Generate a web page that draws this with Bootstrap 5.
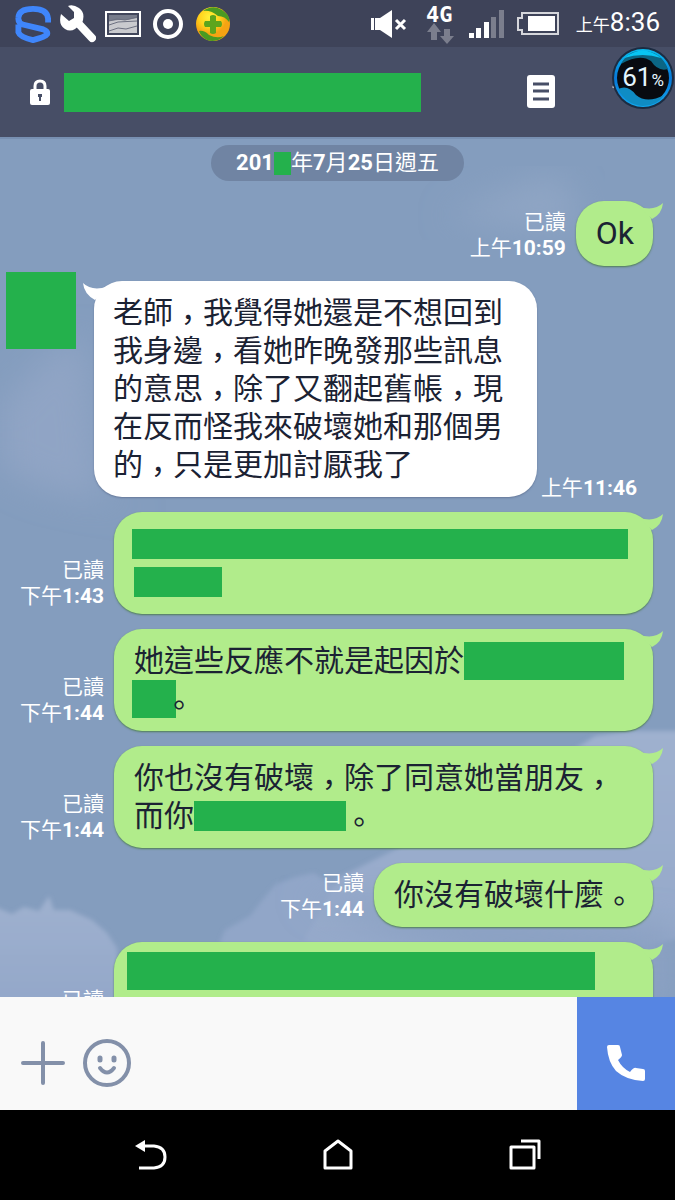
<!DOCTYPE html>
<html lang="zh-Hant">
<head>
<meta charset="utf-8">
<meta name="viewport" content="width=device-width, initial-scale=1">
<title>聊天</title>
<link href="https://cdn.jsdelivr.net/npm/bootstrap@5.3.0/dist/css/bootstrap.min.css" rel="stylesheet">
<style>
  body { font-family: Roboto, "Noto Sans CJK TC", sans-serif; background: #000; }
  svg { display: block; flex: none; }
  .status-bar { height: 47px; background: #3e4359; padding: 0 15px; }
  .status-left { gap: 9px; }
  .status-right { gap: 12px; }
  .clock { font-size: 26px; line-height: 32px; }
  .clock small { font-size: 17px; }
  .chat-header { height: 90px; background: #474e66; padding: 0 30px; }
  .redact { background: #24b14c; }
  .chat-name { width: 357px; height: 39px; margin-left: 14px; }
  .icon-btn { background: none; border: 0; padding: 0; color: inherit; }
  .header-tools { gap: 57px; }
  .float-meter { right: 1px; top: 0; width: 62px; height: 62px; }
  .float-meter span { font-size: 26px; line-height: 30px; color: #e4f6ff; }
  .float-meter small { font-size: 17px; }
  .chat { background: #849dbe; padding-top: 8px; }
  .sky { inset: 0; width: 100%; height: 100%; }
  .date-pill { height: 36px; padding: 0 25px; background: #7084a3; font-size: 22px; line-height: 36px; margin-bottom: 20px; }
  .date-pill .redact { width: 17px; height: 23px; }
  .msg-list { gap: 15px; }
  .sent { gap: 10px; padding-right: 22px; padding-left: 16px; }
  .received { gap: 4px; padding-right: 38px; padding-left: 6px; }
  .avatar { width: 70px; height: 77px; margin: -9px 18px 0 0; margin-right: 14px; }
  .stamp { font-size: 21px; line-height: 26px; color: #fff; white-space: nowrap; text-align: right; padding-bottom: 5px; }
  .received .stamp { line-height: 18px; padding: 0; }
  .bubble { font-size: 30px; line-height: 38px; padding: 13px 19px 13px 20px; border-radius: 28px; color: #1b2233; }
  .sent .bubble { background: #b1ec8b; box-shadow: 0 1px 2px #4f7d55; max-width: 539px; }
  .sent .bubble.full { flex: 0 0 539px; }
  .received .bubble { background: #fff; box-shadow: 0 1px 2px #66799a; flex: 1; padding-left: 19px; }
  .punct { line-height: 20px; vertical-align: -7px; }
  .latin { font-size: 32px; }
  .tail { top: 0; }
  .sent .tail { right: -11px; }
  .received .tail { left: -12px; }
  .bubble .redact { display: inline-block; vertical-align: top; }
  .bar-m { height: 30px; margin-top: 4px; }
  .bar-l { height: 38px; }
  .w-a { width: 496px; margin-left: -2px; }
  .w-b { width: 88px; }
  .w-c { width: 160px; }
  .w-d { width: 44px; margin-left: -2px; margin-right: -12px; }
  .w-e { width: 152px; margin-right: -2px; }
  .w-f { width: 468px; margin: -3px 0 0 -7px; }
  .composer { height: 113px; background: #f9f9f9; color: #8390a9; }
  .composer .tools { gap: 18px; padding-left: 21px; padding-top: 19px; }
  .composer input { background: none; border: 0; outline: 0; font-size: 30px; min-width: 0; }
  .call-btn { width: 98px; background: #5685e3; color: #fff; border: 0; padding-top: 20px; }
  .nav-keys { height: 90px; background: #000; padding: 0 57px; }
</style>
</head>
<body>
<div class="d-flex flex-column vh-100 overflow-hidden">

  <div class="status-bar d-flex flex-shrink-0 align-items-center justify-content-between text-white">
    <div class="status-left d-flex align-items-center">
      <svg width="36" height="38" viewBox="0 0 37 39" fill="none" stroke="#3f86fb" stroke-width="6"><path d="M34 18V14Q33 4 18.500 4Q4 4 3.500 13Q3 18 8 20L29 25Q34 27 33 30Q31 33 18.500 36Q5 33 3.500 28V20"/></svg>
      <svg width="36" height="38" viewBox="0 0 36 38"><path d="M18 18L32 33" stroke="#fff" stroke-width="8" stroke-linecap="round"/><path fill="#fff" d="M8 1L14 7V13L9 16L1 9Q-2 20 5 24Q10 27 15 24L22 18Q26 8 19 3Q13 -1 8 1Z"/></svg>
      <svg width="36" height="26" viewBox="0 0 36 26"><rect width="36" height="26" fill="#fff"/><rect x="2" y="2" width="32" height="22" fill="#41465b"/><rect x="4" y="4" width="28" height="18" fill="#c9cace"/><path d="M4 4h28v3l-10 2-9 0-9 1z" fill="#777c8b"/><path d="M4 10l8-2 8 1 12-3M4 14l9-3 19-1M4 20l9-3 8 1 11-3" stroke="#6c7080" fill="none"/></svg>
      <svg width="36" height="36" viewBox="0 0 36 36"><circle cx="18" cy="18" r="13" fill="none" stroke="#fff" stroke-width="4"/><circle cx="18" cy="18" r="5" fill="#fff"/></svg>
      <svg width="36" height="36" viewBox="0 0 36 36"><defs><radialGradient id="gold" cx=".4" cy=".3"><stop offset="0" stop-color="#fff23a"/><stop offset=".6" stop-color="#ffd21c"/><stop offset="1" stop-color="#f5a313"/></radialGradient></defs><circle cx="18" cy="18" r="17" fill="url(#gold)"/><path d="M8 5Q18-2 27 4Q36 10 34 16Q30 10 23 10Q16 4 8 5Z" fill="#4a9a22"/><path d="M4 25Q9 24 14 29Q22 33 29 30Q22 37 12 34Q6 31 4 25Z" fill="#4a9a22"/><path d="M15 10q3-2 6 0v5h5q2 3 0 6h-5v6q-3 2-6 0v-6h-5q-2-3 0-6h5z" fill="#5da51d"/></svg>
    </div>
    <div class="status-right d-flex align-items-center">
      <svg width="42" height="30" viewBox="0 0 42 30"><path fill="#fff" d="M1 9h3v12H1zM5 9h5L22 1v28L10 21H5z"/><path d="M26 11l9 9m0-9l-9 9" stroke="#fff" stroke-width="3"/></svg>
      <svg width="32" height="42" viewBox="0 0 32 42"><path fill="#7b7e8d" d="M10 20l7 9h-4v8H7v-8H3zM23 41l-7-8h4v-7h6v7h4z"/><text x="2" y="19" fill="#fff" font-family="DejaVu Sans Mono" font-weight="700" font-size="22">4G</text></svg>
      <svg width="36" height="30" viewBox="0 0 36 30"><path fill="#fff" d="M1 24h5v5H1zM8 19h5v10H8zM16 13h5v16h-5z"/><path fill="#7b7e8d" d="M23 8h5v21h-5zM31 1h5v28h-5z"/></svg>
      <svg width="44" height="24" viewBox="0 0 44 24"><path d="M6 1h36v21H6v-4H2V6h4z" fill="none" stroke="#d5d6db" stroke-width="2"/><path fill="#fff" d="M12 4h27v15H12z"/></svg>
      <div class="clock ms-1"><small>上午</small>8:36</div>
    </div>
  </div>

  <header class="chat-header position-relative d-flex flex-shrink-0 align-items-center text-white">
    <svg width="20" height="26" viewBox="0 0 20 26"><rect y="10" width="20" height="16" rx="2" fill="#fff"/><path d="M5 11V7Q5 2 10 2T15 7V11" fill="none" stroke="#fff" stroke-width="3"/><path d="M8 15h4v3h-1v4H9v-4H8z" fill="#474e66"/></svg>
    <div class="chat-name redact"></div>
    <div class="header-tools d-flex align-items-center ms-auto">
      <button class="icon-btn" aria-label="記事本"><svg width="28" height="34" viewBox="0 0 28 34"><rect width="28" height="33" rx="3" fill="#fff"/><path d="M6 9h16M6 16h16M6 24h16" stroke="#474e66" stroke-width="3"/></svg></button>
      <button class="icon-btn" aria-label="選單"><svg width="33" height="16" viewBox="0 0 33 16"><path d="M1 2l15 9L31 2" fill="none" stroke="#fff" stroke-width="3"/></svg></button>
    </div>
    <div class="float-meter position-absolute d-flex align-items-center justify-content-center">
      <svg class="position-absolute start-0 top-0" width="62" height="62" viewBox="0 0 62 62"><defs><linearGradient id="wave" x2="0" y2="1"><stop offset="0" stop-color="#09bdf0"/><stop offset=".5" stop-color="#0878d8"/><stop offset="1" stop-color="#12a8ef"/></linearGradient></defs><circle cx="31" cy="31" r="31" fill="#1c2c42"/><circle cx="31" cy="31" r="29" fill="url(#wave)"/><circle cx="31" cy="31" r="26" fill="#080b10"/><path d="M9 17Q16 3 31 4Q49 4 56 22Q46 25 39 14Q28 6 9 17Z" fill="#0b6684"/><path d="M12 11Q31 -4 49 11Q31 5 12 11Z" fill="#08c5f3"/><path d="M6 42Q16 37 24 48Q35 57 52 48Q45 59 31 59Q14 58 6 42Z" fill="#0f8cc4"/></svg>
      <span class="position-relative">61<small>%</small></span>
    </div>
  </header>

  <main class="chat position-relative flex-fill overflow-hidden d-flex flex-column">
    <svg class="sky position-absolute" viewBox="0 0 675 860" preserveAspectRatio="none">
      <defs><filter id="soft" x="-20%" y="-20%" width="140%" height="140%"><feGaussianBlur stdDeviation="16"/></filter><filter id="edge"><feGaussianBlur stdDeviation="2"/></filter>
      <linearGradient id="cloud" x2="0" y2="1"><stop offset="0" stop-color="#9fb1cf"/><stop offset="1" stop-color="#93a7c9"/></linearGradient></defs>
      <rect width="675" height="2" fill="#7890b2"/>
      <path d="M0 270L50 215 85 200 100 360 150 375 40 350 0 330Z" fill="#90a4c5" filter="url(#soft)"/>
      <path d="M445 80l40-18 55-22 20 0 18 28 0 24-50 0z" fill="#8fa5c4" filter="url(#soft)"/>
      <g filter="url(#edge)"><path d="M-9 768l21 9 12-7 15 4 10-15 5 14 16 0 22 10 15 13 10 15 3 59H-9Z" fill="url(#cloud)"/>
      <path d="M220 805l5-12 25-14 14-18 12-14 20-7 18-4 10 7 30 10 60 60H220Z" fill="#91a6c8"/>
      <path d="M575 612l20-13 40-5 50 0V800L560 830 430 850 300 810 340 740 400 710Z" fill="url(#cloud)"/></g>
      <path d="M300 760L675 790V870H640L400 800Z" fill="#8ba1c3" filter="url(#soft)"/>
    </svg>

    <div class="date-pill position-relative rounded-pill align-self-center d-flex align-items-center text-white"><b>201</b><span class="redact"></span>年<b>7</b>月<b>25</b>日週五</div>

    <div class="msg-list position-relative d-flex flex-column">
      <div class="sent d-flex justify-content-end align-items-end">
        <div class="stamp">已讀<br>上午<b>10:59</b></div>
        <div class="bubble position-relative"><svg class="tail position-absolute" width="32" height="24" viewBox="0 0 32 24"><path d="M6 5L12 7Q24 9 31 2Q30 13 20 18Z" fill="#b1ec8b"/></svg><span class="latin">Ok</span></div>
      </div>

      <div class="received d-flex align-items-end">
        <div class="avatar redact align-self-start flex-shrink-0"></div>
        <div class="bubble position-relative"><svg class="tail position-absolute" width="32" height="24" viewBox="0 0 32 24"><path d="M26 5L20 7Q8 9 1 2Q2 13 13 19Z" fill="#fff"/></svg>老師<span class="punct">，</span>我覺得她還是不想回到我身邊<span class="punct">，</span>看她昨晚發那些訊息的意思<span class="punct">，</span>除了又翻起舊帳<span class="punct">，</span>現在反而怪我來破壞她和那個男的<span class="punct">，</span>只是更加討厭我了</div>
        <div class="stamp">上午<b>11:46</b></div>
      </div>

      <div class="sent d-flex justify-content-end align-items-end">
        <div class="stamp">已讀<br>下午<b>1:43</b></div>
        <div class="bubble full position-relative"><svg class="tail position-absolute" width="32" height="24" viewBox="0 0 32 24"><path d="M6 5L12 7Q24 9 31 2Q30 13 20 18Z" fill="#b1ec8b"/></svg><span class="redact bar-m w-a"></span><br><span class="redact bar-m w-b"></span></div>
      </div>

      <div class="sent d-flex justify-content-end align-items-end">
        <div class="stamp">已讀<br>下午<b>1:44</b></div>
        <div class="bubble full position-relative"><svg class="tail position-absolute" width="32" height="24" viewBox="0 0 32 24"><path d="M6 5L12 7Q24 9 31 2Q30 13 20 18Z" fill="#b1ec8b"/></svg>她這些反應不就是起因於<span class="redact bar-l w-c"></span><br><span class="redact bar-l w-d"></span><span class="punct">。</span></div>
      </div>

      <div class="sent d-flex justify-content-end align-items-end">
        <div class="stamp">已讀<br>下午<b>1:44</b></div>
        <div class="bubble full position-relative"><svg class="tail position-absolute" width="32" height="24" viewBox="0 0 32 24"><path d="M6 5L12 7Q24 9 31 2Q30 13 20 18Z" fill="#b1ec8b"/></svg>你也沒有破壞<span class="punct">，</span>除了同意她當朋友<span class="punct">，</span><br>而你<span class="redact bar-m w-e"></span><span class="punct">。</span></div>
      </div>

      <div class="sent d-flex justify-content-end align-items-end">
        <div class="stamp">已讀<br>下午<b>1:44</b></div>
        <div class="bubble position-relative"><svg class="tail position-absolute" width="32" height="24" viewBox="0 0 32 24"><path d="M6 5L12 7Q24 9 31 2Q30 13 20 18Z" fill="#b1ec8b"/></svg>你沒有破壞什麼<span class="punct">。</span></div>
      </div>

      <div class="sent d-flex justify-content-end align-items-end">
        <div class="stamp">已讀<br>&nbsp;</div>
        <div class="bubble full position-relative"><svg class="tail position-absolute" width="32" height="24" viewBox="0 0 32 24"><path d="M6 5L12 7Q24 9 31 2Q30 13 20 18Z" fill="#b1ec8b"/></svg><span class="redact bar-l w-f"></span><br>&nbsp;</div>
      </div>
    </div>
  </main>

  <form class="composer d-flex flex-shrink-0">
    <div class="tools d-flex align-items-center flex-shrink-0">
      <button type="button" class="icon-btn" aria-label="新增"><svg width="44" height="44" viewBox="0 0 44 44"><path d="M22 2v40M2 22h40" stroke="currentColor" stroke-width="4" stroke-linecap="round"/></svg></button>
      <button type="button" class="icon-btn" aria-label="貼圖"><svg width="48" height="48" viewBox="0 0 48 48" fill="none" stroke="currentColor" stroke-width="4" stroke-linecap="round"><circle cx="24" cy="24" r="22"/><path d="M17 19v2M31 19v2" stroke-width="5"/><path d="M17 29Q24 38 31 29"/></svg></button>
    </div>
    <input type="text" class="flex-fill" aria-label="輸入訊息">
    <button type="button" class="call-btn d-flex align-items-center justify-content-center flex-shrink-0" aria-label="通話"><svg width="38" height="38" viewBox="0 0 38 38"><path fill="#fff" d="M2 1h9q2 0 2 2l2 8q0 2-4 5 4 8 12 12 4-5 6-4l7 1q2 0 2 2v8q0 2-2 2Q19 36 9 27 1 18 0 3 0 1 2 1Z"/></svg></button>
  </form>

  <nav class="nav-keys d-flex justify-content-around align-items-center flex-shrink-0" aria-label="系統按鍵">
    <button class="icon-btn" aria-label="返回"><svg width="32" height="32" viewBox="0 0 32 32"><path d="M8 7H19Q30 8 30 18T19 29H4" fill="none" stroke="#fff" stroke-width="3"/><path d="M0 7l10-6v12z" fill="#fff"/></svg></button>
    <button class="icon-btn" aria-label="主畫面"><svg width="32" height="32" viewBox="0 0 32 32"><path d="M3 29V12L16 2 29 12V29Z" fill="none" stroke="#fff" stroke-width="3" stroke-linejoin="round"/></svg></button>
    <button class="icon-btn" aria-label="最近使用"><svg width="32" height="32" viewBox="0 0 32 32" fill="none" stroke="#fff" stroke-width="3" stroke-linejoin="round"><path d="M2 8h23v21H2zM12 2h18v18"/></svg></button>
  </nav>
</div>
<script src="https://cdn.jsdelivr.net/npm/bootstrap@5.3.0/dist/js/bootstrap.bundle.min.js"></script>
</body>
</html>
